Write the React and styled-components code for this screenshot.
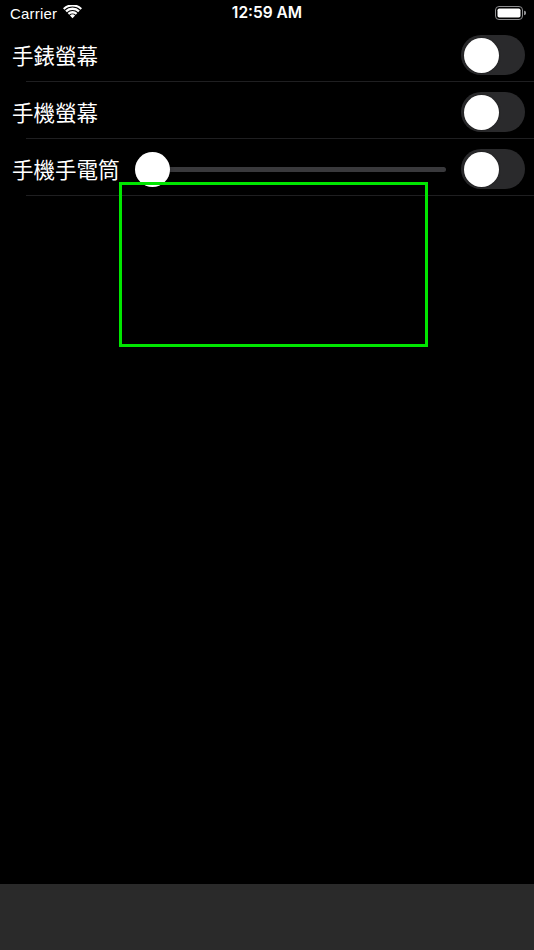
import React from 'react'
import styled, { createGlobalStyle } from 'styled-components'

const GlobalStyle = createGlobalStyle`
html, body {
  margin: 0;
  padding: 0;
  background: #000;
}
body {
  font-family: "Noto Sans CJK TC", "Noto Sans", sans-serif;
  color: #fff;
}
`;

const rows = [
  { id: 'watch', label: '手錶螢幕' },
  { id: 'phone', label: '手機螢幕' },
  { id: 'torch', label: '手機手電筒', slider: 0 },
];

const App = () => {
  return (
    <Page>
      <GlobalStyle />
      <StatusBar>
        <Carrier>
          Carrier
          <WifiIcon />
        </Carrier>
        <Clock>12:59 AM</Clock>
        <BatteryIcon />
      </StatusBar>
      <List>
        {rows.map(row => (
          <li key={row.id}>
            <Row>
              <Label>{row.label}</Label>
              {row.slider !== undefined && <Slider value={row.slider} />}
              <Switch />
            </Row>
            <Separator />
          </li>
        ))}
      </List>
      <Frame />
      <BottomBar />
    </Page>
  )
};

export default App

const WifiIcon = () => (
  <svg width="19" height="14" viewBox="0 0 19 14">
    <path d="M9.5 13.2 L6.9 10.4 A3.8 3.8 0 0 1 12.1 10.4 Z" fill="#fff" />
    <path d="M4.6 8.1 A7 7 0 0 1 14.4 8.1 L12.8 9.8 A4.7 4.7 0 0 0 6.2 9.8 Z" fill="#fff" />
    <path d="M2.2 5.6 A10.4 10.4 0 0 1 16.8 5.6 L15.2 7.3 A8.1 8.1 0 0 0 3.8 7.3 Z" fill="#fff" />
    <path d="M0 3.2 A13.6 13.6 0 0 1 19 3.2 L17.5 4.8 A11.4 11.4 0 0 0 1.5 4.8 Z" fill="#fff" />
  </svg>
);

const BatteryIcon = () => (
  <BatteryBox>
    <svg width="31" height="14" viewBox="0 0 31 14">
      <rect x="0.5" y="0.5" width="27" height="13" rx="3.5" fill="none" stroke="#8e8e90" strokeWidth="1" />
      <rect x="2.5" y="2.5" width="23" height="9" rx="1.8" fill="#fff" />
      <path d="M29 4.8 A2.2 2.2 0 0 1 29 9.2 Z" fill="#8e8e90" />
    </svg>
  </BatteryBox>
);

const Slider = ({ value }) => (
  <SliderTrack>
    <SliderThumb style={{ left: `calc(${value * 100}% - ${value * 34}px)` }} />
  </SliderTrack>
);

const Switch = () => (
  <SwitchTrack>
    <SwitchKnob />
  </SwitchTrack>
);

const Page = styled.div`
position: relative;
display: flex;
flex-direction: column;
width: 534px;
height: 950px;
background: #000;
overflow: hidden;
`;

const StatusBar = styled.div`
display: flex;
align-items: center;
justify-content: space-between;
height: 23px;
padding: 2px 8px 0 10px;
font-family: "Liberation Sans", "Noto Sans", sans-serif;
font-size: 15px;
color: #fff;
position: relative;
`;

const Carrier = styled.div`
display: flex;
align-items: center;
gap: 6px;
letter-spacing: 0.2px;
svg {
  margin-top: -3px;
}
`;

const Clock = styled.div`
position: absolute;
left: 0;
right: 0;
top: 2px;
line-height: 22px;
text-align: center;
font-family: "Inter", "Liberation Sans", sans-serif;
font-weight: 600;
font-size: 15.5px;
pointer-events: none;
`;

const BatteryBox = styled.div`
display: flex;
align-items: center;
margin-top: -1px;
`;

const List = styled.ul`
list-style-type: none;
margin: 0;
padding: 0;
`;

const Row = styled.div`
display: flex;
align-items: center;
height: 52px;
padding: 4px 9px 0 12px;
gap: 15px;
`;

const Label = styled.div`
flex: 0 0 auto;
font-size: 21.5px;
line-height: 1;
color: #fff;
`;

const Separator = styled.div`
height: 1px;
margin-left: 26px;
background: #1f1f21;
`;

const SliderTrack = styled.div`
position: relative;
flex: 1;
height: 5px;
border-radius: 3px;
background: #39393c;
margin-top: 1px;
`;

const SliderThumb = styled.div`
position: absolute;
top: 50%;
width: 35px;
height: 35px;
margin-top: -18px;
border-radius: 50%;
background: #fff;
box-shadow: 0 2px 4px rgba(0,0,0,0.25);
`;

const SwitchTrack = styled.div`
position: relative;
flex: 0 0 64px;
margin-left: auto;
height: 40px;
border-radius: 20px;
background: #2a2a2c;
`;

const SwitchKnob = styled.div`
position: absolute;
top: 2.5px;
left: 2.5px;
width: 35px;
height: 35px;
border-radius: 50%;
background: #fff;
box-shadow: 0 0 2px rgba(0,0,0,0.5);
`;

const Frame = styled.div`
position: absolute;
left: 119px;
top: 182px;
width: 303px;
height: 159px;
border: 3px solid #00e600;
`;

const BottomBar = styled.div`
margin-top: auto;
height: 66px;
background: #2a2a2a;
`;
